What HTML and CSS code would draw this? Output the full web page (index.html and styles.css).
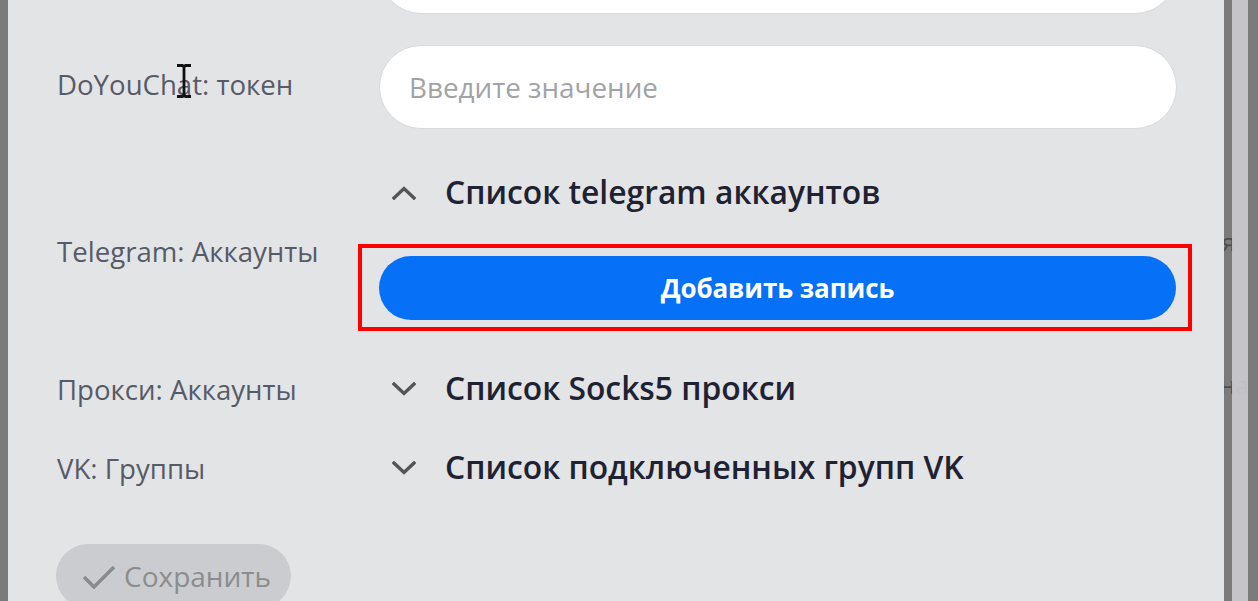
FILE: index.html
```html
<!DOCTYPE html>
<html lang="ru">
<head>
<meta charset="utf-8">
<title>Настройки</title>
<link rel="stylesheet" href="styles.css">
</head>
<body>
<div class="screen">
  <div class="edge-left"></div>
  <main class="panel">
    <div class="row row-first">
      <div class="label"></div>
      <div class="field"><input class="input" type="text" placeholder="Введите значение"></div>
    </div>
    <div class="row row-token">
      <div class="label">DoYouChat: токен</div>
      <div class="field"><input class="input" type="text" placeholder="Введите значение"></div>
    </div>
    <div class="row row-tg">
      <div class="label label-tg">Telegram: Аккаунты</div>
      <div class="field">
        <div class="acc-head">
          <svg class="chev" viewBox="0 0 24 14" width="24" height="14"><path d="M2 12 L12 2.5 L22 12" fill="none" stroke="#555" stroke-width="3.4" stroke-linecap="square"/></svg>
          <span class="acc-title">Список telegram аккаунтов</span>
        </div>
        <div class="btn-wrap">
          <button class="btn-add" type="button">Добавить запись</button>
          <div class="highlight"></div>
        </div>
      </div>
    </div>
    <div class="row row-proxy">
      <div class="label">Прокси: Аккаунты</div>
      <div class="field">
        <div class="acc-head">
          <svg class="chev" viewBox="0 0 24 14" width="24" height="14"><path d="M2 2 L12 11.5 L22 2" fill="none" stroke="#555" stroke-width="3.4" stroke-linecap="square"/></svg>
          <span class="acc-title">Список Socks5 прокси</span>
        </div>
      </div>
    </div>
    <div class="row row-vk">
      <div class="label">VK: Группы</div>
      <div class="field">
        <div class="acc-head">
          <svg class="chev" viewBox="0 0 24 14" width="24" height="14"><path d="M2 2 L12 11.5 L22 2" fill="none" stroke="#555" stroke-width="3.4" stroke-linecap="square"/></svg>
          <span class="acc-title">Список подключенных групп VK</span>
        </div>
      </div>
    </div>
    <div class="actions">
      <button class="btn-save" type="button">
        <svg class="check" viewBox="0 0 34 26" width="34" height="26"><path d="M2 13 L12 23 L32 3" fill="none" stroke="#8a8b8d" stroke-width="3.6"/></svg>
        <span>Сохранить</span>
      </button>
    </div>
    <svg class="cursor" viewBox="0 0 16 34" width="16" height="34"><path d="M1 1.5 H6.5 L8 3 L9.5 1.5 H15 M8 3 V31 M1 32.5 H6.5 L8 31 L9.5 32.5 H15" fill="none" stroke="#111" stroke-width="2.8"/></svg>
  </main>
  <div class="edge-right">
    <span class="bg-text t1">я</span>
    <span class="bg-text t2">на</span>
    <div class="scroll-strip"></div>
  </div>
</div>
</body>
</html>
```
FILE: styles.css
```css
* { box-sizing: border-box; }
html, body { margin: 0; padding: 0; height: 100%; overflow: hidden; }
body { background: #7b7b7b; font-family: "Open Sans", "Noto Sans", sans-serif; }

.screen { display: flex; height: 601px; width: 1258px; }
.edge-left { width: 8px; background: #7b7b7b; flex: none; }

.panel {
  position: relative;
  width: 1216px;
  flex: none;
  background: #e3e4e6;
  padding-left: 49px;
  overflow: hidden;
}

.row { display: flex; align-items: center; }
.label {
  width: 322px;
  flex: none;
  font-size: 27.6px;
  color: #575b67;
  white-space: nowrap;
}
.field { width: 798px; flex: none; }

.input {
  display: block;
  width: 100%;
  height: 84px;
  border: 1px solid #d9dadc;
  border-radius: 42px;
  background: #fff;
  padding: 0 0 0 29px;
  font-family: inherit;
  font-size: 27.8px;
  color: #333;
  outline: none;
}
.input::placeholder { color: #a2a3a5; }

.row-first { margin-top: -70px; }
.row-token { margin-top: 31px; }
.row-token .label { margin-top: -6px; }

.row-tg { margin-top: 39px; }
.label-tg { margin-top: 14px; }

.acc-head { display: flex; align-items: center; height: 50px; padding-left: 13px; }
.chev { flex: none; }
.acc-title {
  margin-left: 29px;
  font-size: 31.8px;
  font-weight: 600;
  color: #1e2232;
  white-space: nowrap;
  margin-top: -3px;
}

.btn-wrap { position: relative; margin-top: 38px; }
.btn-add {
  display: block;
  width: 797px;
  height: 64px;
  border: none;
  border-radius: 32px;
  background: #0670f7;
  color: #fff;
  font-family: inherit;
  font-weight: 700;
  font-size: 26px;
  letter-spacing: -0.1px;
  cursor: pointer;
}
.highlight {
  position: absolute;
  left: -21px; right: -15px; top: -12px; bottom: -11px;
  border: 4px solid #ff0000;
  pointer-events: none;
}

.row-proxy { margin-top: 44px; }
.row-vk { margin-top: 29px; }

.actions { margin-top: 51px; }
.btn-save {
  display: flex;
  align-items: center;
  width: 235px;
  height: 64px;
  margin-left: -1px;
  border: none;
  border-radius: 32px;
  background: #cbcccf;
  color: #8b8c8e;
  font-family: inherit;
  font-size: 28px;
  padding: 0 0 0 26px;
}
.btn-save .check { flex: none; margin-right: 8px; margin-top: 2px; }

.cursor { position: absolute; left: 168px; top: 64px; }

.edge-right {
  position: relative;
  width: 34px;
  flex: none;
  background: #7b7b7b;
  overflow: hidden;
}
.bg-text {
  position: absolute;
  font-size: 24px;
  color: #4d4d4f;
  white-space: nowrap;
}
.t1 { left: -2px; top: 225px; }
.t2 { left: -4px; top: 368px; }
.scroll-strip {
  position: absolute;
  left: 8px; top: 0; bottom: 0;
  width: 16px;
  background: rgba(205, 205, 210, 0.9);
}
```
